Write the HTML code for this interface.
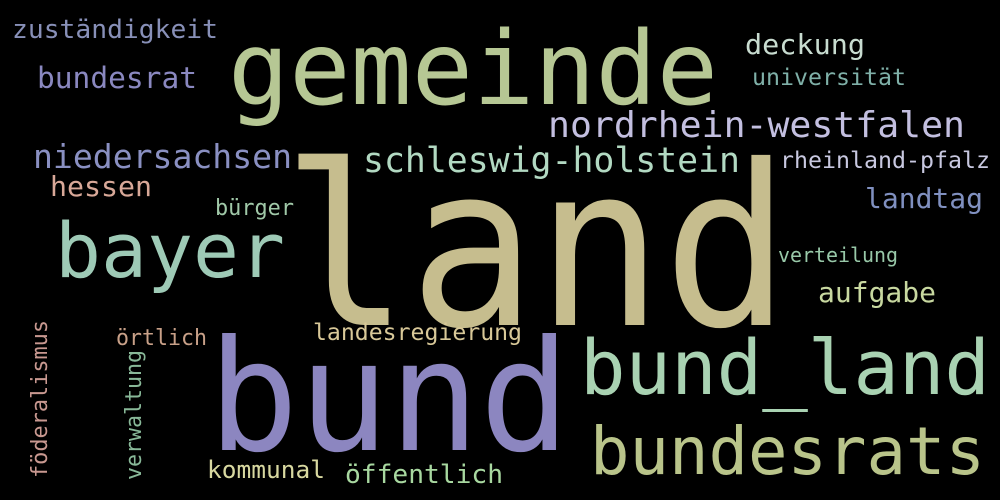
<!DOCTYPE html>
<html><head><meta charset="utf-8"><style>
html,body{margin:0;padding:0;background:#000;width:1000px;height:500px;overflow:hidden}
svg text{font-family:"DejaVu Sans Mono","Liberation Mono",monospace}
</style></head><body>
<svg width="1000" height="500" viewBox="0 0 1000 500" xmlns="http://www.w3.org/2000/svg">
<rect width="1000" height="500" fill="#000"/>
<text x="282" y="325" font-size="224" fill="#c6bd8e" textLength="508" lengthAdjust="spacingAndGlyphs">land</text>
<text x="228" y="104" font-size="102" fill="#b6c794" textLength="490" lengthAdjust="spacingAndGlyphs">gemeinde</text>
<text x="208" y="450" font-size="154" fill="#8c86c0" textLength="362" lengthAdjust="spacingAndGlyphs">bund</text>
<text x="580" y="394" font-size="76" fill="#a9d2b2" textLength="410" lengthAdjust="spacingAndGlyphs">bund_land</text>
<text x="590" y="474" font-size="66" fill="#b9c48a" textLength="395" lengthAdjust="spacingAndGlyphs">bundesrats</text>
<text x="55" y="277" font-size="76" fill="#9ecab6" textLength="230" lengthAdjust="spacingAndGlyphs">bayer</text>
<text x="548" y="137" font-size="36" fill="#c3bfe0" textLength="417" lengthAdjust="spacingAndGlyphs">nordrhein-westfalen</text>
<text x="363" y="172" font-size="35" fill="#b2d9c2" textLength="377" lengthAdjust="spacingAndGlyphs">schleswig-holstein</text>
<text x="33" y="168" font-size="33" fill="#8a90c2" textLength="259" lengthAdjust="spacingAndGlyphs">niedersachsen</text>
<text x="12" y="38" font-size="26" fill="#8890b8" textLength="206" lengthAdjust="spacingAndGlyphs">zuständigkeit</text>
<text x="37" y="88" font-size="29" fill="#8a88c0" textLength="160" lengthAdjust="spacingAndGlyphs">bundesrat</text>
<text x="745" y="54" font-size="28" fill="#c8dcd0" textLength="120" lengthAdjust="spacingAndGlyphs">deckung</text>
<text x="752" y="85" font-size="23" fill="#7fb0a8" textLength="154" lengthAdjust="spacingAndGlyphs">universität</text>
<text x="780" y="168" font-size="23" fill="#c8c8e0" textLength="210" lengthAdjust="spacingAndGlyphs">rheinland-pfalz</text>
<text x="50" y="196" font-size="28" fill="#d8a898" textLength="102" lengthAdjust="spacingAndGlyphs">hessen</text>
<text x="215" y="215" font-size="22" fill="#a0c8a8" textLength="79" lengthAdjust="spacingAndGlyphs">bürger</text>
<text x="865" y="208" font-size="28" fill="#8090c0" textLength="118" lengthAdjust="spacingAndGlyphs">landtag</text>
<text x="778" y="262" font-size="20" fill="#98c8a8" textLength="120" lengthAdjust="spacingAndGlyphs">verteilung</text>
<text x="818" y="302" font-size="28" fill="#c8d8a0" textLength="118" lengthAdjust="spacingAndGlyphs">aufgabe</text>
<text x="313" y="340" font-size="23" fill="#d8c898" textLength="209" lengthAdjust="spacingAndGlyphs">landesregierung</text>
<text x="116" y="345" font-size="22" fill="#c8a088" textLength="91" lengthAdjust="spacingAndGlyphs">örtlich</text>
<text x="207" y="478" font-size="24" fill="#d8d8a0" textLength="118" lengthAdjust="spacingAndGlyphs">kommunal</text>
<text x="345" y="483" font-size="26" fill="#a8d8a0" textLength="158" lengthAdjust="spacingAndGlyphs">öffentlich</text>
<text x="0" y="0" font-size="22" fill="#c89890" textLength="158" lengthAdjust="spacingAndGlyphs" transform="translate(47,478) rotate(-90)">föderalismus</text>
<text x="0" y="0" font-size="22" fill="#88b898" textLength="130" lengthAdjust="spacingAndGlyphs" transform="translate(141,480) rotate(-90)">verwaltung</text>
</svg>
</body></html>
